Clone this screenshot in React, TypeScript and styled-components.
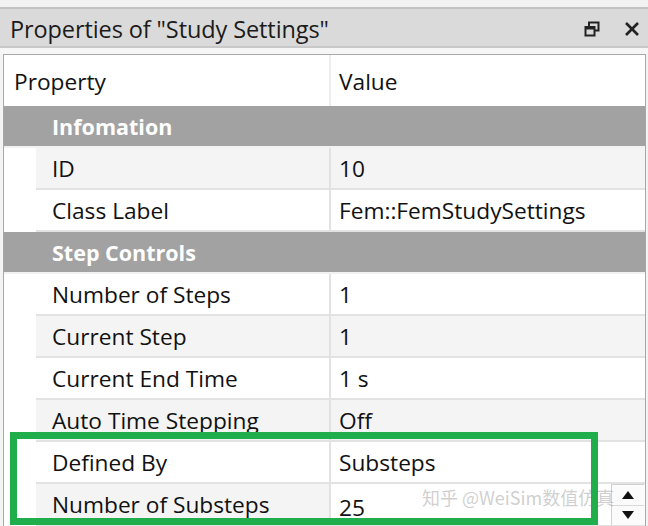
import React from 'react'
import styled, { createGlobalStyle } from 'styled-components'

const GlobalStyle = createGlobalStyle`
  html, body {
    margin: 0;
    padding: 0;
    background: #f0f0f0;
  }
  body {
    font-family: 'Open Sans', 'Noto Sans', 'Noto Sans CJK SC', sans-serif;
  }
`

const Window = styled.div`
  position: relative;
  width: 648px;
  height: 526px;
  overflow: hidden;
  background: #f3f3f3;
  display: flex;
  flex-direction: column;
`

const TopStrip = styled.div`
  height: 7px;
  background: #f2f2f2;
`

const TitleBar = styled.div`
  height: 35px;
  display: flex;
  align-items: center;
  padding: 2px 8px 0 10px;
  background: #dadada;
  border-top: 2px solid #c2c2c2;
  border-bottom: 2px solid #c8c8c8;
`

const Title = styled.div`
  flex: 1;
  font-size: 23.5px;
  letter-spacing: -0.1px;
  color: #1b1b1b;
  white-space: nowrap;
`

const TitleButtons = styled.div`
  display: flex;
  align-items: center;
  gap: 24px;
`

const Gap = styled.div`
  height: 6px;
  background: #f6f6f6;
`

const Grid = styled.div`
  flex: 1;
  margin: 0 2px 0 3px;
  background: #ffffff;
  border: 1px solid #a8a8a8;
  border-bottom: none;
  display: flex;
  flex-direction: column;
`

const HeaderRow = styled.div`
  height: 51px;
  display: grid;
  grid-template-columns: 327px 1fr;
  font-size: 22.7px;
  color: #111;
`

const HeaderCell = styled.div<{ $first?: boolean }>`
  display: flex;
  align-items: center;
  padding-left: ${({ $first }) => ($first ? '10px' : '8px')};
  padding-top: 2px;
  border-right: ${({ $first }) => ($first ? '2px solid #ececec' : 'none')};
`

const Category = styled.div`
  height: 42px;
  display: flex;
  align-items: center;
  padding-left: 48px;
  background: #a2a2a2;
  color: #ffffff;
  font-weight: 700;
  font-size: 21.5px;
  border-bottom: 2px solid #f2f2f2;
  box-sizing: border-box;
`

const Row = styled.div`
  height: 42px;
  display: grid;
  grid-template-columns: 32px 295px 1fr;
  font-size: 22.7px;
  color: #111;
`

const Gutter = styled.div`
  background: #ffffff;
`

const Cell = styled.div<{ $alt?: boolean; $value?: boolean }>`
  display: flex;
  align-items: center;
  justify-content: space-between;
  padding-left: ${({ $value }) => ($value ? '8px' : '16px')};
  background: ${({ $alt }) => ($alt ? '#f4f4f4' : '#ffffff')};
  border-bottom: 2px solid #e2e2e2;
  border-right: ${({ $value }) => ($value ? 'none' : '2px solid #e2e2e2')};
  box-sizing: border-box;
  white-space: nowrap;
`

const EditValue = styled.span`
  padding-top: 5px;
`

const Spin = styled.div`
  display: flex;
  flex-direction: column;
  width: 32px;
  height: 40px;
  margin-right: 1px;
  border-left: 1px solid #d0d0d0;
  border-top: 1px solid #d0d0d0;
`

const SpinButton = styled.div`
  flex: 1;
  display: flex;
  align-items: center;
  justify-content: center;
  background: #fbfbfb;
  & + & {
    border-top: 1px solid #d8d8d8;
  }
`

const Highlight = styled.div`
  position: absolute;
  left: 10px;
  top: 432px;
  width: 588px;
  height: 93px;
  border: 7px solid #1fae4b;
  box-sizing: border-box;
  pointer-events: none;
`

const Watermark = styled.div`
  position: absolute;
  left: 422px;
  top: 484px;
  font-size: 18px;
  color: rgba(175, 175, 175, 0.6);
  font-family: 'Noto Sans CJK SC', sans-serif;
  white-space: nowrap;
  pointer-events: none;
`

type Item = { label: string; value: string; edit?: boolean }

const groups: { title: string; items: Item[] }[] = [
  {
    title: 'Infomation',
    items: [
      { label: 'ID', value: '10' },
      { label: 'Class Label', value: 'Fem::FemStudySettings' },
    ],
  },
  {
    title: 'Step Controls',
    items: [
      { label: 'Number of Steps', value: '1' },
      { label: 'Current Step', value: '1' },
      { label: 'Current End Time', value: '1 s' },
      { label: 'Auto Time Stepping', value: 'Off' },
      { label: 'Defined By', value: 'Substeps' },
      { label: 'Number of Substeps', value: '25', edit: true },
    ],
  },
]

function RestoreIcon() {
  return (
    <svg width="16" height="16" viewBox="0 0 16 16" fill="none" stroke="#222" strokeWidth="2">
      <rect x="5" y="1.5" width="9.5" height="8" />
      <rect x="1.5" y="6" width="9" height="8.5" fill="#dadada" />
      <line x1="1.5" y1="7" x2="10.5" y2="7" strokeWidth="3" />
    </svg>
  )
}

function CloseIcon() {
  return (
    <svg width="16" height="16" viewBox="0 0 16 16" stroke="#222" strokeWidth="2.6">
      <line x1="2" y1="2" x2="14" y2="14" />
      <line x1="14" y1="2" x2="2" y2="14" />
    </svg>
  )
}

function Arrow({ up }: { up?: boolean }) {
  return (
    <svg width="12" height="8" viewBox="0 0 12 8">
      <polygon points={up ? '6,0 12,8 0,8' : '0,0 12,0 6,8'} fill="#111" />
    </svg>
  )
}

export default function App() {
  let index = 1

  return (
    <>
      <GlobalStyle />
      <Window>
        <TopStrip />
        <TitleBar>
          <Title>Properties of "Study Settings"</Title>
          <TitleButtons>
            <RestoreIcon />
            <CloseIcon />
          </TitleButtons>
        </TitleBar>
        <Gap />
        <Grid>
          <HeaderRow>
            <HeaderCell $first>Property</HeaderCell>
            <HeaderCell>Value</HeaderCell>
          </HeaderRow>
          {groups.map((group) => {
            index++
            return (
              <React.Fragment key={group.title}>
                <Category>{group.title}</Category>
                {group.items.map((item) => {
                  index++
                  const alt = index % 2 === 1
                  return (
                    <Row key={item.label}>
                      <Gutter />
                      <Cell $alt={alt}>{item.label}</Cell>
                      <Cell $value $alt={alt && !item.edit}>
                        {item.edit ? <EditValue>{item.value}</EditValue> : item.value}
                        {item.edit && (
                          <Spin>
                            <SpinButton>
                              <Arrow up />
                            </SpinButton>
                            <SpinButton>
                              <Arrow />
                            </SpinButton>
                          </Spin>
                        )}
                      </Cell>
                    </Row>
                  )
                })}
              </React.Fragment>
            )
          })}
        </Grid>
        <Watermark>知乎 @WeiSim数值仿真</Watermark>
        <Highlight />
      </Window>
    </>
  )
}
